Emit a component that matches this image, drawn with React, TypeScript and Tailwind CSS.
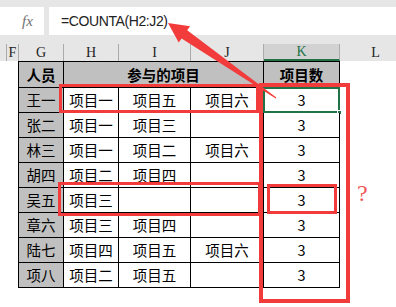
import React from "react";

const cols = [
	{ key: "edge", label: "", w: "w-[7px]" },
	{ key: "F", label: "F", w: "w-[12px]" },
	{ key: "G", label: "G", w: "w-[45px]" },
	{ key: "H", label: "H", w: "w-[55px]" },
	{ key: "I", label: "I", w: "w-[72px]" },
	{ key: "J", label: "J", w: "w-[73px]" },
	{ key: "K", label: "K", w: "w-[76px]" },
	{ key: "L", label: "L", w: "w-[72px]" },
];

const rows = [
	["王一", "项目一", "项目五", "项目六"],
	["张二", "项目一", "项目三", ""],
	["林三", "项目一", "项目二", "项目六"],
	["胡四", "项目二", "项目四", ""],
	["吴五", "项目三", "", ""],
	["章六", "项目三", "项目四", ""],
	["陆七", "项目四", "项目五", "项目六"],
	["项八", "项目二", "项目五", ""],
];

const cjk = { fontFamily: '"Noto Sans CJK SC", "Liberation Sans", sans-serif' };

function FormulaBar() {
	return (
		<div className="flex h-[35px] gap-[5px] bg-[#e6e6e6] pt-[7px]">
			<div className="flex w-[44px] items-center bg-white pl-[22px] text-[15px] italic text-[#707070]" style={{ fontFamily: '"Liberation Serif", serif' }}>
				fx
			</div>
			<div className="flex flex-1 items-center bg-white pl-[12px] text-[14px] tracking-[-0.4px] text-[#222]" style={{ fontFamily: '"Liberation Sans", Arial, sans-serif' }}>
				=COUNTA(H2:J2)
			</div>
		</div>
	);
}

function ColumnHeaders() {
	return (
		<div className="pt-[9px] bg-[#e6e6e6]">
			<div className="flex h-[17px] overflow-hidden" style={{ fontFamily: '"Liberation Serif", serif' }}>
				{cols.map((c) => (
					<div
						key={c.key}
						className={`${c.w} shrink-0 flex items-center justify-center border-r border-[#ababab] text-[14px] leading-none ${
							c.key === "K" ? "bg-[#d2d2d2] text-[#217346] border-b-2 border-b-[#217346]" : "text-[#222]"
						}`}
					>
						{c.label}
					</div>
				))}
			</div>
		</div>
	);
}

function Cell({ children, gray, bold, className = "" }: { children?: React.ReactNode; gray?: boolean; bold?: boolean; className?: string }) {
	return (
		<div
			className={`relative flex items-center justify-center border-r border-b border-black text-[14.5px] text-black ${gray ? "bg-[#c0c0c0]" : "bg-white"} ${
				bold ? "font-bold" : ""
			} ${className}`}
		>
			{children}
		</div>
	);
}

function Sheet() {
	return (
		<div className="pl-[18px]" style={cjk}>
			<div className="grid w-fit grid-cols-[45px_55px_72px_73px_76px] grid-rows-[26px_repeat(8,25px)] border-l border-t border-black">
				<Cell gray bold>人员</Cell>
				<Cell gray bold className="col-span-3">参与的项目</Cell>
				<Cell gray bold>项目数</Cell>
				{rows.map((r, i) => (
					<React.Fragment key={r[0]}>
						<Cell gray>{r[0]}</Cell>
						<Cell>{r[1]}</Cell>
						<Cell>{r[2]}</Cell>
						<Cell>{r[3]}</Cell>
						<Cell>
							3
							{i === 0 && (
								<>
									<div className="absolute -left-px -top-px -right-px -bottom-px border-2 border-[#217346]" />
									<div className="absolute -right-[3px] -bottom-[3px] h-[5px] w-[5px] bg-[#217346] border border-white" />
								</>
							)}
						</Cell>
					</React.Fragment>
				))}
			</div>
		</div>
	);
}

function Annotations() {
	return (
		<>
			<div className="absolute left-[59px] top-[84px] h-[29px] w-[200px] border-[3px] border-[#f23c3c]" />
			<div className="absolute left-[58px] top-[182px] h-[34px] w-[203px] border-[3px] border-[#f23c3c]" />
			<div className="absolute left-[259px] top-[83px] h-[220px] w-[91px] border-[4px] border-[#f23c3c]" />
			<div className="absolute left-[267px] top-[184px] h-[30px] w-[70px] border-[3px] border-[#f23c3c]" />
			<svg className="absolute left-0 top-0" width="396" height="307" viewBox="0 0 396 307">
				<polygon
					points="168,23 190.1,26.2 187.2,30.3 276.3,97.6 275.7,98.4 181.6,38.5 178.7,42.6"
					fill="#f23c3c"
				/>
			</svg>
			<div className="absolute left-[357px] top-[181px] text-[24px] leading-none text-[#f25757]" style={{ fontFamily: '"Liberation Serif", serif' }}>
				?
			</div>
		</>
	);
}

export default function App() {
	return (
		<div className="relative h-[307px] w-[396px] overflow-hidden bg-white">
			<FormulaBar />
			<ColumnHeaders />
			<Sheet />
			<Annotations />
		</div>
	);
}
